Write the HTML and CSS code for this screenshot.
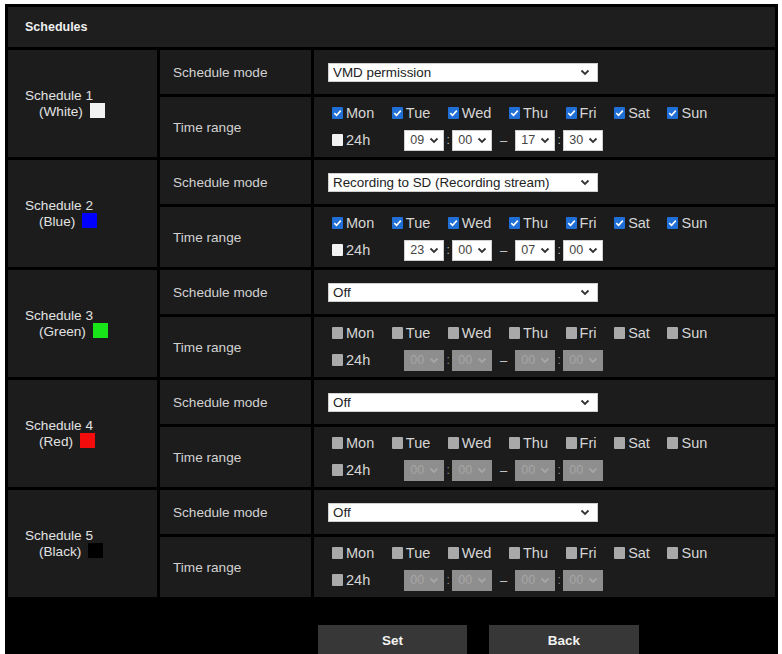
FILE: index.html
```html
<!DOCTYPE html>
<html lang="en">
<head>
<meta charset="utf-8">
<title>Schedules</title>
<link rel="stylesheet" href="styles.css">
</head>
<body>
<div class="panel">
  <div class="panel-title">Schedules</div>

  <div class="sched-grid">
    <!-- Schedule 1 -->
    <div class="cell sched-name">
      <div>
        <div>Schedule 1</div>
        <div class="sched-color">(White)<span class="swatch swatch-white"></span></div>
      </div>
    </div>
    <div class="cell label">Schedule mode</div>
    <div class="cell field">
      <span class="select select-mode"><span class="select-text">VMD permission</span><svg class="chev" viewBox="0 0 10 7"><path d="M1.5 1.5 L5 5 L8.5 1.5"/></svg></span>
    </div>
    <div class="cell label">Time range</div>
    <div class="cell field times">
      <div class="days">
        <span class="day"><span class="box on"><svg viewBox="0 0 12 12"><path d="M2.5 6.2 L5 8.6 L9.6 3.4"/></svg></span>Mon</span>
        <span class="day"><span class="box on"><svg viewBox="0 0 12 12"><path d="M2.5 6.2 L5 8.6 L9.6 3.4"/></svg></span>Tue</span>
        <span class="day"><span class="box on"><svg viewBox="0 0 12 12"><path d="M2.5 6.2 L5 8.6 L9.6 3.4"/></svg></span>Wed</span>
        <span class="day"><span class="box on"><svg viewBox="0 0 12 12"><path d="M2.5 6.2 L5 8.6 L9.6 3.4"/></svg></span>Thu</span>
        <span class="day"><span class="box on"><svg viewBox="0 0 12 12"><path d="M2.5 6.2 L5 8.6 L9.6 3.4"/></svg></span>Fri</span>
        <span class="day"><span class="box on"><svg viewBox="0 0 12 12"><path d="M2.5 6.2 L5 8.6 L9.6 3.4"/></svg></span>Sat</span>
        <span class="day"><span class="box on"><svg viewBox="0 0 12 12"><path d="M2.5 6.2 L5 8.6 L9.6 3.4"/></svg></span>Sun</span>
      </div>
      <div class="hours">
        <span class="day allday"><span class="box"></span>24h</span>
        <span class="select select-time"><span class="select-text">09</span><svg class="chev" viewBox="0 0 10 7"><path d="M1.5 1.5 L5 5 L8.5 1.5"/></svg></span>
        <span class="colon">:</span>
        <span class="select select-time"><span class="select-text">00</span><svg class="chev" viewBox="0 0 10 7"><path d="M1.5 1.5 L5 5 L8.5 1.5"/></svg></span>
        <span class="dash">–</span>
        <span class="select select-time"><span class="select-text">17</span><svg class="chev" viewBox="0 0 10 7"><path d="M1.5 1.5 L5 5 L8.5 1.5"/></svg></span>
        <span class="colon">:</span>
        <span class="select select-time"><span class="select-text">30</span><svg class="chev" viewBox="0 0 10 7"><path d="M1.5 1.5 L5 5 L8.5 1.5"/></svg></span>
      </div>
    </div>

    <!-- Schedule 2 -->
    <div class="cell sched-name">
      <div>
        <div>Schedule 2</div>
        <div class="sched-color">(Blue)<span class="swatch swatch-blue"></span></div>
      </div>
    </div>
    <div class="cell label">Schedule mode</div>
    <div class="cell field">
      <span class="select select-mode"><span class="select-text">Recording to SD (Recording stream)</span><svg class="chev" viewBox="0 0 10 7"><path d="M1.5 1.5 L5 5 L8.5 1.5"/></svg></span>
    </div>
    <div class="cell label">Time range</div>
    <div class="cell field times">
      <div class="days">
        <span class="day"><span class="box on"><svg viewBox="0 0 12 12"><path d="M2.5 6.2 L5 8.6 L9.6 3.4"/></svg></span>Mon</span>
        <span class="day"><span class="box on"><svg viewBox="0 0 12 12"><path d="M2.5 6.2 L5 8.6 L9.6 3.4"/></svg></span>Tue</span>
        <span class="day"><span class="box on"><svg viewBox="0 0 12 12"><path d="M2.5 6.2 L5 8.6 L9.6 3.4"/></svg></span>Wed</span>
        <span class="day"><span class="box on"><svg viewBox="0 0 12 12"><path d="M2.5 6.2 L5 8.6 L9.6 3.4"/></svg></span>Thu</span>
        <span class="day"><span class="box on"><svg viewBox="0 0 12 12"><path d="M2.5 6.2 L5 8.6 L9.6 3.4"/></svg></span>Fri</span>
        <span class="day"><span class="box on"><svg viewBox="0 0 12 12"><path d="M2.5 6.2 L5 8.6 L9.6 3.4"/></svg></span>Sat</span>
        <span class="day"><span class="box on"><svg viewBox="0 0 12 12"><path d="M2.5 6.2 L5 8.6 L9.6 3.4"/></svg></span>Sun</span>
      </div>
      <div class="hours">
        <span class="day allday"><span class="box"></span>24h</span>
        <span class="select select-time"><span class="select-text">23</span><svg class="chev" viewBox="0 0 10 7"><path d="M1.5 1.5 L5 5 L8.5 1.5"/></svg></span>
        <span class="colon">:</span>
        <span class="select select-time"><span class="select-text">00</span><svg class="chev" viewBox="0 0 10 7"><path d="M1.5 1.5 L5 5 L8.5 1.5"/></svg></span>
        <span class="dash">–</span>
        <span class="select select-time"><span class="select-text">07</span><svg class="chev" viewBox="0 0 10 7"><path d="M1.5 1.5 L5 5 L8.5 1.5"/></svg></span>
        <span class="colon">:</span>
        <span class="select select-time"><span class="select-text">00</span><svg class="chev" viewBox="0 0 10 7"><path d="M1.5 1.5 L5 5 L8.5 1.5"/></svg></span>
      </div>
    </div>

    <!-- Schedule 3 -->
    <div class="cell sched-name">
      <div>
        <div>Schedule 3</div>
        <div class="sched-color">(Green)<span class="swatch swatch-green"></span></div>
      </div>
    </div>
    <div class="cell label">Schedule mode</div>
    <div class="cell field">
      <span class="select select-mode"><span class="select-text">Off</span><svg class="chev" viewBox="0 0 10 7"><path d="M1.5 1.5 L5 5 L8.5 1.5"/></svg></span>
    </div>
    <div class="cell label">Time range</div>
    <div class="cell field times disabled">
      <div class="days">
        <span class="day"><span class="box"></span>Mon</span>
        <span class="day"><span class="box"></span>Tue</span>
        <span class="day"><span class="box"></span>Wed</span>
        <span class="day"><span class="box"></span>Thu</span>
        <span class="day"><span class="box"></span>Fri</span>
        <span class="day"><span class="box"></span>Sat</span>
        <span class="day"><span class="box"></span>Sun</span>
      </div>
      <div class="hours">
        <span class="day allday"><span class="box"></span>24h</span>
        <span class="select select-time"><span class="select-text">00</span><svg class="chev" viewBox="0 0 10 7"><path d="M1.5 1.5 L5 5 L8.5 1.5"/></svg></span>
        <span class="colon">:</span>
        <span class="select select-time"><span class="select-text">00</span><svg class="chev" viewBox="0 0 10 7"><path d="M1.5 1.5 L5 5 L8.5 1.5"/></svg></span>
        <span class="dash">–</span>
        <span class="select select-time"><span class="select-text">00</span><svg class="chev" viewBox="0 0 10 7"><path d="M1.5 1.5 L5 5 L8.5 1.5"/></svg></span>
        <span class="colon">:</span>
        <span class="select select-time"><span class="select-text">00</span><svg class="chev" viewBox="0 0 10 7"><path d="M1.5 1.5 L5 5 L8.5 1.5"/></svg></span>
      </div>
    </div>

    <!-- Schedule 4 -->
    <div class="cell sched-name">
      <div>
        <div>Schedule 4</div>
        <div class="sched-color">(Red)<span class="swatch swatch-red"></span></div>
      </div>
    </div>
    <div class="cell label">Schedule mode</div>
    <div class="cell field">
      <span class="select select-mode"><span class="select-text">Off</span><svg class="chev" viewBox="0 0 10 7"><path d="M1.5 1.5 L5 5 L8.5 1.5"/></svg></span>
    </div>
    <div class="cell label">Time range</div>
    <div class="cell field times disabled">
      <div class="days">
        <span class="day"><span class="box"></span>Mon</span>
        <span class="day"><span class="box"></span>Tue</span>
        <span class="day"><span class="box"></span>Wed</span>
        <span class="day"><span class="box"></span>Thu</span>
        <span class="day"><span class="box"></span>Fri</span>
        <span class="day"><span class="box"></span>Sat</span>
        <span class="day"><span class="box"></span>Sun</span>
      </div>
      <div class="hours">
        <span class="day allday"><span class="box"></span>24h</span>
        <span class="select select-time"><span class="select-text">00</span><svg class="chev" viewBox="0 0 10 7"><path d="M1.5 1.5 L5 5 L8.5 1.5"/></svg></span>
        <span class="colon">:</span>
        <span class="select select-time"><span class="select-text">00</span><svg class="chev" viewBox="0 0 10 7"><path d="M1.5 1.5 L5 5 L8.5 1.5"/></svg></span>
        <span class="dash">–</span>
        <span class="select select-time"><span class="select-text">00</span><svg class="chev" viewBox="0 0 10 7"><path d="M1.5 1.5 L5 5 L8.5 1.5"/></svg></span>
        <span class="colon">:</span>
        <span class="select select-time"><span class="select-text">00</span><svg class="chev" viewBox="0 0 10 7"><path d="M1.5 1.5 L5 5 L8.5 1.5"/></svg></span>
      </div>
    </div>

    <!-- Schedule 5 -->
    <div class="cell sched-name">
      <div>
        <div>Schedule 5</div>
        <div class="sched-color">(Black)<span class="swatch swatch-black"></span></div>
      </div>
    </div>
    <div class="cell label">Schedule mode</div>
    <div class="cell field">
      <span class="select select-mode"><span class="select-text">Off</span><svg class="chev" viewBox="0 0 10 7"><path d="M1.5 1.5 L5 5 L8.5 1.5"/></svg></span>
    </div>
    <div class="cell label">Time range</div>
    <div class="cell field times disabled">
      <div class="days">
        <span class="day"><span class="box"></span>Mon</span>
        <span class="day"><span class="box"></span>Tue</span>
        <span class="day"><span class="box"></span>Wed</span>
        <span class="day"><span class="box"></span>Thu</span>
        <span class="day"><span class="box"></span>Fri</span>
        <span class="day"><span class="box"></span>Sat</span>
        <span class="day"><span class="box"></span>Sun</span>
      </div>
      <div class="hours">
        <span class="day allday"><span class="box"></span>24h</span>
        <span class="select select-time"><span class="select-text">00</span><svg class="chev" viewBox="0 0 10 7"><path d="M1.5 1.5 L5 5 L8.5 1.5"/></svg></span>
        <span class="colon">:</span>
        <span class="select select-time"><span class="select-text">00</span><svg class="chev" viewBox="0 0 10 7"><path d="M1.5 1.5 L5 5 L8.5 1.5"/></svg></span>
        <span class="dash">–</span>
        <span class="select select-time"><span class="select-text">00</span><svg class="chev" viewBox="0 0 10 7"><path d="M1.5 1.5 L5 5 L8.5 1.5"/></svg></span>
        <span class="colon">:</span>
        <span class="select select-time"><span class="select-text">00</span><svg class="chev" viewBox="0 0 10 7"><path d="M1.5 1.5 L5 5 L8.5 1.5"/></svg></span>
      </div>
    </div>
  </div>

  <div class="actions">
    <button class="btn" type="button">Set</button>
    <button class="btn" type="button">Back</button>
  </div>
</div>
</body>
</html>
```

FILE: styles.css
```css
* {
  box-sizing: border-box;
}

html,
body {
  height: 100%;
}

body {
  margin: 0;
  background: #fff;
  font-family: "Liberation Sans", Arial, sans-serif;
  overflow: hidden;
}

/* Outer black frame */
.panel {
  width: 773px;
  height: 650px;
  margin: 4px 0 0 5px;
  padding: 3px 3px 0;
  background: #000;
}

.panel-title {
  height: 40px;
  display: flex;
  align-items: center;
  padding-left: 17px;
  background: #1e1e1e;
  color: #f0f0f0;
  font-size: 12.5px;
  font-weight: bold;
}

/* Settings table: name | item | value */
.sched-grid {
  margin-top: 3px;
  display: grid;
  grid-template-columns: 149px 151px 1fr;
  grid-template-rows: repeat(5, 44px 60px);
  gap: 3px;
}

.cell {
  background: #1c1c1c;
  display: flex;
  align-items: center;
}

.sched-name {
  grid-row: span 2;
  padding-left: 17px;
  color: #e2e2e2;
  font-size: 13.6px;
  line-height: 16px;
}

.sched-color {
  display: flex;
  align-items: center;
  padding-left: 14px;
}

.swatch {
  width: 15px;
  height: 15px;
  margin-left: 7px;
  margin-top: -2px;
}

.swatch-white { background: #f2f2f2; }
.swatch-blue { background: #0000ff; }
.swatch-green { background: #19e619; }
.swatch-red { background: #f20c0c; }
.swatch-black { background: #000; }

.label {
  padding-left: 13px;
  color: #d2d2d2;
  font-size: 13.6px;
}

.field {
  padding-left: 14px;
}

/* Drop-down look */
.select {
  display: inline-flex;
  align-items: center;
  justify-content: space-between;
  background: #fff;
  border: 1px solid #cfcfcf;
  color: #222;
}

.select-mode {
  width: 270px;
  height: 19px;
  padding: 0 7px 0 4px;
  font-size: 13.4px;
}

.select-time {
  width: 40px;
  height: 21px;
  padding: 0 4px 0 5px;
  font-size: 12.5px;
  color: #444;
}

.chev {
  width: 10px;
  height: 7px;
  flex: none;
}

.chev path {
  fill: none;
  stroke: #333;
  stroke-width: 1.8;
}

/* Time range block */
.times {
  flex-direction: column;
  align-items: flex-start;
  justify-content: center;
  gap: 9px;
  padding-left: 18px;
  padding-top: 1px;
}

.days,
.hours {
  display: flex;
  align-items: center;
}

.days {
  gap: 17.6px;
  height: 16px;
}

.day {
  display: inline-flex;
  align-items: center;
  gap: 3px;
  color: #d6d6d6;
  font-size: 14.5px;
}

.box {
  width: 11px;
  height: 12px;
  border-radius: 1px;
  background: #f2f2f2;
  display: inline-flex;
}

.box.on {
  background: #1f6fd6;
}

.box svg {
  width: 11px;
  height: 12px;
}

.box svg path {
  fill: none;
  stroke: #fff;
  stroke-width: 1.7;
}

.allday {
  margin-right: 34px;
}

.colon {
  width: 8px;
  text-align: center;
  color: #bbb;
  font-size: 12px;
}

.dash {
  width: 23px;
  text-align: center;
  color: #cfcfcf;
  font-size: 13px;
}

/* Time range while the schedule is off */
.disabled .box {
  background: #a9a9a9;
}

.disabled .select {
  background: #8e8e8e;
  border-color: #8e8e8e;
  color: #a6a6a6;
}

.disabled .chev path {
  stroke: #a6a6a6;
}

.disabled .colon {
  color: #8e8e8e;
}

/* Buttons */
.actions {
  display: flex;
  gap: 22px;
  padding: 28px 0 0 310px;
}

.btn {
  width: 149px;
  height: 30px;
  border: none;
  background: #373737;
  color: #f2f2f2;
  font-family: "Liberation Sans", Arial, sans-serif;
  font-size: 13.5px;
  font-weight: bold;
  padding: 0;
}

.btn + .btn {
  width: 150px;
}
```
